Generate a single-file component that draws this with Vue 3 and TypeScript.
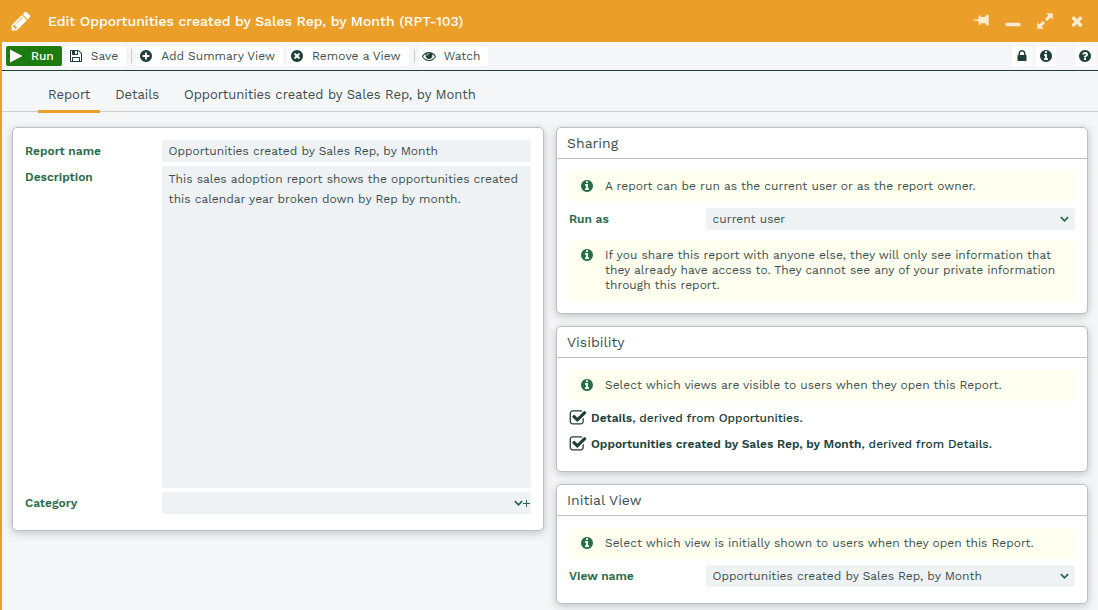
<script setup lang="ts">
import { ref } from 'vue'

const disc =
  'm384 192q0 209-103 385.5t-279.5 279.5-385.5 103-385.5-103-279.5-279.5-103-385.5 103-385.5 279.5-279.5 385.5-103 385.5 103 279.5 279.5 103 385.5z'

const icons: Record<string, string> = {
  pencil:
    'M491 1536l91-91-235-235-91 91v107h128v128h107zm523-928q0-22-22-22-10 0-17 7l-542 542q-7 7-7 17 0 22 22 22 10 0 17-7l542-542q7-7 7-17zm-54-192l416 416-832 832h-416v-416zm683 96q0 53-37 90l-166 166-416-416 166-165q36-38 90-38 53 0 91 38l235 234q37 39 37 91z',
  play: 'M128 64L1728 896L128 1728z',
  save: 'M512 1536h768v-384h-768v384zm896 0h128v-896q0-14-10-38.5t-20-34.5l-281-281q-10-10-34-20t-39-10v416q0 40-28 68t-68 28h-576q-40 0-68-28t-28-68v-416h-128v1280h128v-416q0-40 28-68t68-28h832q40 0 68 28t28 68v416zm-384-928v-320q0-13-9.500-22.500t-22.500-9.500h-192q-13 0-22.500 9.500t-9.500 22.500v320q0 13 9.500 22.500t22.500 9.500h192q13 0 22.500-9.500t9.500-22.500zm640 32v928q0 40-28 68t-68 28h-1344q-40 0-68-28t-28-68v-1344q0-40 28-68t68-28h928q40 0 88 20t76 48l280 280q28 28 48 76t20 88z',
  plus:
    'M1344 960v-128q0-26-19-45t-45-19h-256v-256q0-26-19-45t-45-19h-128q-26 0-45 19t-19 45v256h-256q-26 0-45 19t-19 45v128q0 26 19 45t45 19h256v256q0 26 19 45t45 19h128q26 0 45-19t19-45v-256h256q26 0 45-19t19-45zm-64-256' +
    disc,
  remove:
    'M1277 1122q0-26-19-45l-181-181 181-181q19-19 19-45 0-27-19-46l-90-90q-19-19-46-19-26 0-45 19l-181 181-181-181q-19-19-45-19-27 0-46 19l-90 90q-19 19-19 46 0 26 19 45l181 181-181 181q-19 19-19 45 0 27 19 46l90 90q19 19 46 19 26 0 45-19l181-181 181 181q19 19 45 19 27 0 46-19l90-90q19-19 19-46zm3-418' +
    disc,
  eye: 'M1664 960q-152-236-381-353 61 104 61 225 0 185-131.500 316.500t-316.500 131.500-316.500-131.500-131.500-316.500q0-121 61-225-229 117-381 353 133 205 333.500 326.500t434.500 121.500 434.500-121.500 333.500-326.500zm-720-384q0-20-14-34t-34-14q-125 0-214.500 89.500t-89.500 214.500q0 20 14 34t34 14 34-14 14-34q0-86 61-147t147-61q20 0 34-14t14-34zm848 384q0 34-20 69-140 230-376.500 368.500t-499.500 138.500-499.500-139-376.500-368q-20-35-20-69t20-69q140-229 376.500-368t499.500-139 499.500 139 376.500 368q20 35 20 69z',
  lock: 'M640 768h512v-192q0-106-75-181t-181-75-181 75-75 181v192zm832 96v576q0 40-28 68t-68 28h-960q-40 0-68-28t-28-68v-576q0-40 28-68t68-28h32v-192q0-184 132-316t316-132 316 132 132 316v192h32q40 0 68 28t28 68z',
  info:
    'M1152 1376v-160q0-14-9-23t-23-9h-96v-512q0-14-9-23t-23-9h-320q-14 0-23 9t-9 23v160q0 14 9 23t23 9h96v320h-96q-14 0-23 9t-9 23v160q0 14 9 23t23 9h448q14 0 23-9t9-23zm-128-896v-160q0-14-9-23t-23-9h-192q-14 0-23 9t-9 23v160q0 14 9 23t23 9h192q14 0 23-9t9-23zm256 224' +
    disc,
  help:
    'M1024 1376v-192q0-14-9-23t-23-9h-192q-14 0-23 9t-9 23v192q0 14 9 23t23 9h192q14 0 23-9t9-23zm256-672q0-88-55.500-163t-138.500-116-170-41q-243 0-371 213-15 24 8 42l132 100q7 6 19 6 16 0 25-12 53-68 86-92 34-24 86-24 48 0 85.500 26t37.500 59q0 38-20 61t-68 45q-63 28-115.500 86.500t-52.500 125.500v36q0 14 9 23t23 9h192q14 0 23-9t9-23q0-19 21.500-49.500t54.500-49.500q32-18 49-28.500t46-35 44.500-48 28-60.500 12.500-81z' +
    disc,
  pin: 'M0 760L620 700V380Q620 240 730 240Q840 240 860 460H1260Q1400 440 1480 280Q1520 200 1620 200H1760V1400H1620Q1520 1400 1480 1320Q1400 1160 1260 1140H860Q840 1360 730 1360Q620 1360 620 1220V900L0 840z',
  minimize: 'M160 1080H1632Q1728 1080 1728 1176V1400Q1728 1496 1632 1496H160Q64 1496 64 1400V1176Q64 1080 160 1080z',
  expand:
    'M1040 32H1696Q1760 32 1760 96V752L1520 512L1120 912L880 672L1280 272zM752 1760H96Q32 1760 32 1696V1040L272 1280L672 880L912 1120L512 1520z',
  close:
    'M1490 1322q0 40-28 68l-136 136q-28 28-68 28t-68-28l-294-294-294 294q-28 28-68 28t-68-28l-136-136q-28-28-28-68t28-68l294-294-294-294q-28-28-28-68t28-68l136-136q28-28 68-28t68 28l294 294 294-294q28-28 68-28t68 28l136 136q28 28 28 68t-28 68l-294 294 294 294q28 28 28 68z',
  checked:
    'M1472 930v318q0 119-84.500 203.500t-203.500 84.500h-832q-119 0-203.500-84.500t-84.500-203.500v-832q0-119 84.500-203.500t203.500-84.500h832q63 0 117 25 15 7 18 23 3 17-9 29l-49 49q-10 10-23 10-3 0-9-2-23-6-45-6h-832q-66 0-113 47t-47 113v832q0 66 47 113t113 47h832q66 0 113-47t47-113v-254q0-13 9-22l64-64q10-10 23-10 6 0 12 3 20 8 20 29zm231-489l-814 814q-24 24-57 24t-57-24l-430-430q-24-24-24-57t24-57l110-110q24-24 57-24t57 24l263 263 647-647q24-24 57-24t57 24l110 110q24 24 24 57t-24 57z',
  unchecked:
    'M352 128h832q224 0 288 288v832q-64 288-288 288h-832q-224 0-288-288v-832q64-288 288-288zm0 128q-160 0-160 160v832q0 160 160 160h832q160 0 160-160v-832q0-160-160-160z'
}

const tabs = ['Report', 'Details', 'Opportunities created by Sales Rep, by Month']
const activeTab = ref(0)
const reportName = ref('Opportunities created by Sales Rep, by Month')
const description = ref(
  'This sales adoption report shows the opportunities created this calendar year broken down by Rep by month.'
)
const category = ref('')
const runAs = ref('current user')
const initialView = ref(tabs[2])
const views = ref([
  { name: 'Details', source: 'Opportunities', visible: true },
  { name: 'Opportunities created by Sales Rep, by Month', source: 'Details', visible: true }
])
const windowActions = [
  { icon: 'pin', label: 'Pin' },
  { icon: 'minimize', label: 'Minimize' },
  { icon: 'expand', label: 'Expand' },
  { icon: 'close', label: 'Close' }
]
</script>

<template>
  <div class="window">
    <header class="titlebar">
      <svg class="pencil" viewBox="0 0 1792 1792"><path :d="icons.pencil" /></svg>
      <h1>Edit Opportunities created by Sales Rep, by Month (RPT-103)</h1>
      <button v-for="a in windowActions" :key="a.icon" class="win-btn" :aria-label="a.label">
        <svg viewBox="0 0 1792 1792"><path :d="icons[a.icon]" /></svg>
      </button>
    </header>

    <div class="toolbar">
      <button class="tool run"><svg viewBox="0 0 1792 1792"><path :d="icons.play" /></svg><span>Run</span></button>
      <button class="tool"><svg viewBox="0 0 1792 1792"><path :d="icons.save" /></svg><span>Save</span></button>
      <i class="sep"></i>
      <button class="tool"><svg viewBox="0 0 1792 1792"><path :d="icons.plus" /></svg><span>Add Summary View</span></button>
      <button class="tool"><svg viewBox="0 0 1792 1792"><path :d="icons.remove" /></svg><span>Remove a View</span></button>
      <i class="sep"></i>
      <button class="tool"><svg viewBox="0 0 1792 1792"><path :d="icons.eye" /></svg><span>Watch</span></button>
      <div class="tool-end">
        <button class="tool square" aria-label="Permissions"><svg viewBox="0 0 1792 1792"><path :d="icons.lock" /></svg></button>
        <button class="tool square" aria-label="Information"><svg viewBox="0 0 1792 1792"><path :d="icons.info" /></svg></button>
        <button class="tool square help" aria-label="Help"><svg viewBox="0 0 1792 1792"><path :d="icons.help" /></svg></button>
      </div>
    </div>

    <nav class="tabs">
      <a
        v-for="(t, i) in tabs"
        :key="t"
        href="#"
        :class="{ active: i === activeTab }"
        @click.prevent="activeTab = i"
      >{{ t }}</a>
    </nav>

    <main class="content">
      <section class="card form">
        <div class="row">
          <label for="report-name">Report name</label>
          <input id="report-name" v-model="reportName" class="field" type="text" />
        </div>
        <div class="row">
          <label for="description">Description</label>
          <textarea id="description" v-model="description" class="field"></textarea>
        </div>
        <div class="row">
          <label for="category">Category</label>
          <div class="field picker">
            <select id="category" v-model="category"><option value=""></option></select>
            <svg class="chevron" viewBox="0 0 10 6"><path d="M1 1l4 4 4-4" /></svg>
            <button class="add-category" aria-label="Add category">
              <svg viewBox="0 0 7 7"><path d="M3 0h1v3h3v1h-3v3h-1v-3h-3v-1h3z" /></svg>
            </button>
          </div>
        </div>
      </section>

      <div class="side">
        <section class="card">
          <h2>Sharing</h2>
          <div class="body">
            <p class="note">
              <svg viewBox="0 0 1792 1792"><path :d="icons.info" /></svg>
              <span>A report can be run as the current user or as the report owner.</span>
            </p>
            <div class="row">
              <label for="run-as">Run as</label>
              <div class="field picker">
                <select id="run-as" v-model="runAs"><option>current user</option><option>report owner</option></select>
                <svg class="chevron" viewBox="0 0 10 6"><path d="M1 1l4 4 4-4" /></svg>
              </div>
            </div>
            <p class="note">
              <svg viewBox="0 0 1792 1792"><path :d="icons.info" /></svg>
              <span>If you share this report with anyone else, they will only see information that they already have access to. They cannot see any of your private information through this report.</span>
            </p>
          </div>
        </section>

        <section class="card">
          <h2>Visibility</h2>
          <div class="body roomy">
            <p class="note">
              <svg viewBox="0 0 1792 1792"><path :d="icons.info" /></svg>
              <span>Select which views are visible to users when they open this Report.</span>
            </p>
            <label v-for="v in views" :key="v.name" class="check">
              <input v-model="v.visible" type="checkbox" />
              <svg viewBox="0 0 1792 1792"><path :d="v.visible ? icons.checked : icons.unchecked" fill-rule="evenodd" /></svg>
              <span><b>{{ v.name }}</b>, derived from {{ v.source }}.</span>
            </label>
          </div>
        </section>

        <section class="card">
          <h2>Initial View</h2>
          <div class="body roomy">
            <p class="note">
              <svg viewBox="0 0 1792 1792"><path :d="icons.info" /></svg>
              <span>Select which view is initially shown to users when they open this Report.</span>
            </p>
            <div class="row">
              <label for="view-name">View name</label>
              <div class="field picker">
                <select id="view-name" v-model="initialView"><option v-for="v in views" :key="v.name">{{ v.name }}</option></select>
                <svg class="chevron" viewBox="0 0 10 6"><path d="M1 1l4 4 4-4" /></svg>
              </div>
            </div>
          </div>
        </section>
      </div>
    </main>
  </div>
</template>

<style>
body {
  margin: 0;
  background: #f5f6f8;
}
</style>

<style scoped>
.window {
  box-sizing: border-box;
  min-height: 100vh;
  border-left: 2px solid #eb9f29;
  background: #f5f6f8;
  color: #3c4f4c;
  font: 12px/20px "Work Sans", Inter, sans-serif;
}
button,
input,
textarea,
select {
  margin: 0;
  border: 0;
  font: inherit;
  color: inherit;
}
svg {
  display: block;
  flex: none;
  fill: currentColor;
}
.titlebar {
  display: flex;
  align-items: center;
  height: 42px;
  padding-right: 11px;
  background: #eb9f29;
  color: #fff;
}
.pencil {
  width: 22px;
  height: 22px;
  margin: 0 16px 0 8px;
}
h1 {
  flex: 1;
  margin: 0;
  font-size: 14px;
  font-weight: 500;
  line-height: 20px;
}
.win-btn {
  width: 20px;
  height: 20px;
  margin-left: 12px;
  padding: 2px;
  background: none;
  color: #fcebd0;
}
.win-btn svg {
  width: 16px;
  height: 16px;
}
.toolbar {
  display: flex;
  align-items: center;
  height: 28px;
  padding: 0 3px 0 4px;
  border-bottom: 1px solid #213f3a;
}
.tool {
  display: flex;
  align-items: center;
  gap: 8px;
  height: 20px;
  margin-right: 4px;
  padding: 0 8px 0 3px;
  border-radius: 2px;
  background: #fff;
  white-space: nowrap;
}
.tool svg {
  width: 14px;
  height: 14px;
  color: #213f3a;
}
.tool.run {
  background: #1e7b0f;
  color: #fff;
  font-weight: 500;
}
.tool.run svg {
  color: #fff;
}
.sep {
  width: 1px;
  height: 14px;
  margin: 0 4px 0 1px;
  background: #c8cccf;
}
.tool-end {
  display: flex;
  margin-left: auto;
}
.tool.square {
  padding: 0 3px;
}
.tool.help {
  margin: 0 0 0 15px;
}
.tabs {
  display: flex;
  height: 40px;
  padding-left: 36px;
  gap: 5px;
  border-bottom: 1px solid #ccd0d2;
}
.tabs a {
  height: 39px;
  padding: 0 10px;
  border-bottom: 3px solid transparent;
  color: #3c4f4c;
  font-size: 13px;
  line-height: 48px;
  text-decoration: none;
}
.tabs a.active {
  border-bottom-color: #eb9f29;
}
.content {
  display: grid;
  grid-template-columns: minmax(0, 1fr) minmax(0, 1fr);
  align-items: start;
  gap: 12px;
  padding: 15px 10px 6px;
}
.side {
  display: flex;
  flex-direction: column;
  gap: 12px;
}
.card {
  border: 1px solid #bfbfbf;
  border-radius: 5px;
  background: #fff;
  box-shadow: 0 2px 8px rgba(0, 0, 0, 0.22);
}
.form {
  padding: 12px;
}
h2 {
  margin: 0;
  padding: 5px 10px;
  border-bottom: 1px solid #bfbfbf;
  font-size: 14px;
  font-weight: 400;
  line-height: 20px;
}
.body {
  display: flex;
  flex-direction: column;
  padding: 6px 12px;
}
.body.roomy {
  padding-bottom: 12px;
}
.row {
  display: flex;
  margin-bottom: 4px;
}
.row label {
  width: 27%;
  flex: none;
  color: #2a6b4b;
  font-weight: 600;
  line-height: 22px;
}
.field {
  box-sizing: border-box;
  flex: 1;
  min-width: 0;
  height: 22px;
  padding: 0 7px;
  border-radius: 3px;
  background: #eef2f5;
}
textarea.field {
  height: 322px;
  padding: 3px 7px;
  line-height: 20px;
  resize: none;
}
.picker {
  display: flex;
  align-items: center;
  padding: 0 1px 0 0;
}
.picker select {
  flex: 1;
  min-width: 0;
  height: 22px;
  margin-right: -14px;
  padding: 0 20px 0 7px;
  appearance: none;
  background: transparent;
}
.chevron {
  width: 9px;
  height: 6px;
  margin-right: 5px;
  fill: none;
  stroke: #2a6b4b;
  stroke-width: 2;
  pointer-events: none;
}
.chevron:has(+ .add-category) {
  margin-right: 0;
}
.add-category {
  padding: 0;
  background: none;
  color: #2a6b4b;
}
.add-category svg {
  width: 7px;
  height: 7px;
}
.note {
  display: flex;
  gap: 11px;
  margin: 6px 0;
  padding: 8px 11px;
  border-radius: 5px;
  background: #fffff0;
  line-height: 15px;
}
.note svg {
  width: 14px;
  height: 14px;
  color: #22704e;
}
.check {
  position: relative;
  display: flex;
  align-items: center;
  gap: 4px;
  height: 22px;
  margin-bottom: 4px;
  color: #213f3a;
  font-weight: 500;
}
.check input {
  position: absolute;
  left: 0;
  width: 18px;
  height: 18px;
  opacity: 0;
}
.check svg {
  width: 18px;
  height: 18px;
}
.check b {
  font-weight: 600;
}
</style>
